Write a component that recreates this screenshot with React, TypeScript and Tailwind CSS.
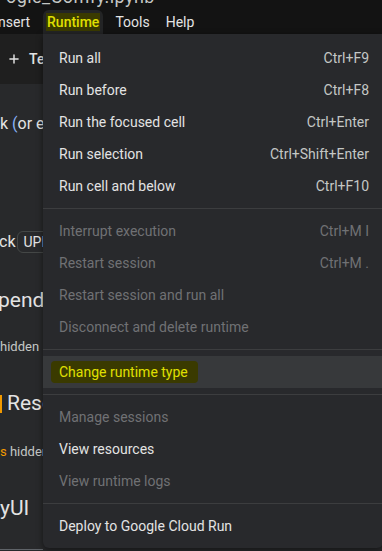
import { Plus } from 'lucide-react';

type Item = { label: string; shortcut?: string; disabled?: boolean; highlight?: boolean };

const groups: Item[][] = [
    [
        { label: 'Run all', shortcut: 'Ctrl+F9' },
        { label: 'Run before', shortcut: 'Ctrl+F8' },
        { label: 'Run the focused cell', shortcut: 'Ctrl+Enter' },
        { label: 'Run selection', shortcut: 'Ctrl+Shift+Enter' },
        { label: 'Run cell and below', shortcut: 'Ctrl+F10' },
    ],
    [
        { label: 'Interrupt execution', shortcut: 'Ctrl+M I', disabled: true },
        { label: 'Restart session', shortcut: 'Ctrl+M .', disabled: true },
        { label: 'Restart session and run all', disabled: true },
        { label: 'Disconnect and delete runtime', disabled: true },
    ],
    [{ label: 'Change runtime type', highlight: true }],
    [
        { label: 'Manage sessions', disabled: true },
        { label: 'View resources' },
        { label: 'View runtime logs', disabled: true },
    ],
    [{ label: 'Deploy to Google Cloud Run' }],
];

const MenuRow = ({ item }: { item: Item }) => {
    if (item.highlight) {
        // hand-drawn marker over the label
        return (
            <div className="h-8 bg-[#37393b] flex items-center pl-[8px]">
                <span className="bg-[#3a3a00] text-[#e0e000] pl-[8px] pr-[10px] leading-[22px] rounded-sm">{item.label}</span>
            </div>
        );
    }
    return (
        <div className="h-8 flex items-center justify-between pl-4 pr-[14px]">
            <span className={item.disabled ? 'text-[#707174]' : 'text-[#e3e3e3]'}>{item.label}</span>
            {item.shortcut && (
                <span className={item.disabled ? 'text-[#707174]' : 'text-[#c4c7c5]'}>{item.shortcut}</span>
            )}
        </div>
    );
};

export default function App() {
    return (
        <div
            className="relative w-[382px] h-[551px] overflow-hidden bg-[#28292b] text-[14px]"
            style={{ fontFamily: 'Roboto, "Liberation Sans", sans-serif' }}
        >
            {/* Title strip + menubar */}
            <div className="bg-[#131313] h-[34px] relative overflow-hidden">
                <div className="absolute -top-[17px] left-[6px] text-[#c4c7c5] text-[18px] tracking-wide">
                    ogle_Comfy.ipynb
                </div>
                <div className="flex items-start h-full pt-[10px] text-[#e3e3e3]">
                    <span className="h-6 flex items-center -ml-[2px] mr-[13px]">nsert</span>
                    <div className="bg-[#232425] rounded-t-md px-[3px] h-6 flex items-center mr-[12px]">
                        <span className="bg-[#3a3a00] text-[#e0e000] font-medium px-[1px] leading-[18px]">Runtime</span>
                    </div>
                    <span className="h-6 flex items-center mr-[16px]">Tools</span>
                    <span className="h-6 flex items-center">Help</span>
                </div>
            </div>

            {/* Toolbar */}
            <div className="bg-[#1f1f1f] h-[50px] flex items-center pl-[7px] gap-[8px] text-[#e3e3e3]">
                <Plus size={14} strokeWidth={2.5} />
                <span className="font-medium">Te</span>
            </div>

            {/* Notebook content behind menu */}
            <div className="text-[#e3e3e3] whitespace-nowrap">
                <div className="mt-[28px] text-[16px]">
                    k <span className="text-[#8ab4f8]">(</span>or en
                </div>
                <div className="mt-[94px] flex items-center text-[16px]">
                    <span className="-ml-[1px]">ck</span>
                    <span className="ml-[2px] border border-[#444746] rounded-md px-[5px] text-[14px] leading-[20px] text-[#e3e3e3]">UPLOAD</span>
                </div>
                <div className="mt-[31px] text-[21px] -ml-[2px]">pendencies</div>
                <div className="mt-[20px] text-[13px] text-[#c4c7c5]">hidden</div>
                <div className="mt-[32px] flex items-center text-[21px]">
                    <span className="w-[2px] h-[18px] bg-[#f29900] mr-[5px]" />
                    <span>Resources</span>
                </div>
                <div className="mt-[22px] text-[13px]">
                    <span className="text-[#f29900]">s</span>
                    <span className="text-[#c4c7c5]"> hidden</span>
                </div>
                <div className="mt-[32px] text-[21px]">yUI</div>
                <div className="mt-[24px] w-[43px] h-px bg-[#5f6368]" />
            </div>

            {/* Runtime dropdown */}
            <div className="absolute left-[43px] top-[34px] w-[340px] bg-[#28292c] rounded-b-md shadow-[0_2px_6px_rgba(0,0,0,0.5)] pt-2 pb-[6px]">
                {groups.map((g, gi) => (
                    <div key={gi}>
                        {gi > 0 && <div className="h-px bg-[#3c3d3f] my-[6px]" />}
                        {g.map((item) => (
                            <MenuRow key={item.label} item={item} />
                        ))}
                    </div>
                ))}
            </div>
        </div>
    );
}
